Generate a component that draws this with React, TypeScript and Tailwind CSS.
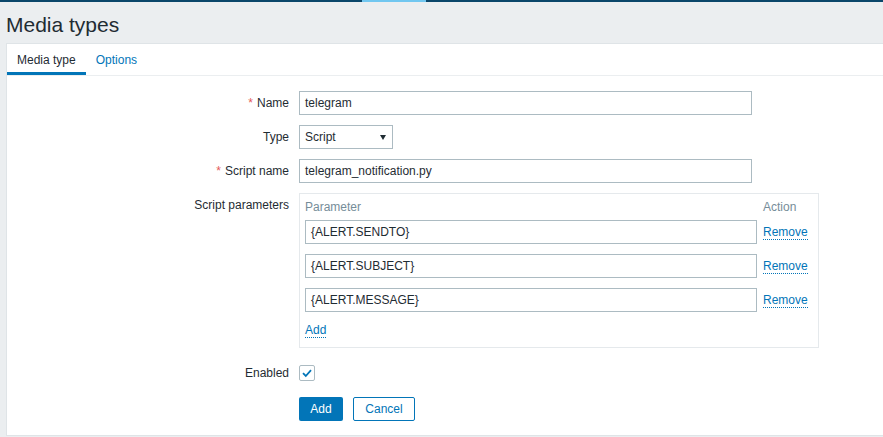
import React from "react";

const params = ["{ALERT.SENDTO}", "{ALERT.SUBJECT}", "{ALERT.MESSAGE}"];

function Label({ text, required }: { text: string; required?: boolean }) {
  return (
    <div className="w-[282px] h-[24px] flex items-center justify-end shrink-0">
      {required && <span className="text-[#e45959] mr-[4px]">*</span>}
      <span>{text}</span>
    </div>
  );
}

function Input({ value, width }: { value: string; width: string }) {
  return (
    <div className={`${width} h-[24px] border border-[#acbbc2] bg-white px-[5px] flex items-center`}>
      {value}
    </div>
  );
}

function DottedLink({ children }: { children: React.ReactNode }) {
  return (
    <span className="inline-block leading-[14px] text-[#0275b8] border-b border-dotted border-[#0275b8] cursor-pointer">
      {children}
    </span>
  );
}

export default function App() {
  return (
    <div className="min-h-screen bg-[#ebeef0] font-['Liberation_Sans',Arial,sans-serif] text-[12px] text-[#1f2c33]">
      {/* Top strip */}
      <div className="h-[2px] bg-[#0a466a] flex">
        <div className="ml-[362px] w-[64px] bg-[#71c7f0]" />
      </div>

      {/* Title */}
      <h1 className="pl-[6px] pt-[11px] pb-[6px] text-[21px] leading-[24px] font-normal">Media types</h1>

      {/* Panel */}
      <div className="ml-[6px] bg-white border-t border-l border-b border-[#dfe4e7]">
        {/* Tabs */}
        <div className="flex h-[32px] border-b border-[#ebeef0]">
          <div className="h-[31px] px-[10px] pt-[8px] leading-[16px] border-b-[3px] border-[#0275b8]">Media type</div>
          <div className="h-[31px] px-[10px] pt-[8px] leading-[16px] text-[#0275b8]">Options</div>
        </div>

        {/* Form */}
        <div className="pt-[15px] pb-[14px] flex flex-col gap-[10px]">
          <div className="flex gap-[10px]">
            <Label text="Name" required />
            <Input value="telegram" width="w-[453px]" />
          </div>

          <div className="flex gap-[10px]">
            <Label text="Type" />
            <div className="w-[94px] h-[24px] border border-[#acbbc2] pl-[5px] pr-[6px] flex items-center justify-between">
              <span>Script</span>
              <svg width="6" height="5" viewBox="0 0 6 5">
                <path d="M0 0 H6 L3 5 Z" fill="#1f2c33" />
              </svg>
            </div>
          </div>

          <div className="flex gap-[10px]">
            <Label text="Script name" required />
            <Input value="telegram_notification.py" width="w-[453px]" />
          </div>

          <div className="flex gap-[10px] items-start">
            <Label text="Script parameters" />
            <div className="w-[520px] border border-[#e5e9ec] pt-[5px] px-[5px] pb-[9px]">
              <div className="flex gap-[6px] leading-[16px] text-[#768d99]">
                <div className="w-[452px]">Parameter</div>
                <div>Action</div>
              </div>
              <div className="mt-[5px] flex flex-col gap-[10px]">
                {params.map((p) => (
                  <div key={p} className="flex gap-[6px] items-center">
                    <Input value={p} width="w-[452px]" />
                    <DottedLink>Remove</DottedLink>
                  </div>
                ))}
              </div>
              <div className="mt-[11px] flex">
                <DottedLink>Add</DottedLink>
              </div>
            </div>
          </div>

          <div className="flex gap-[10px] mt-[3px]">
            <Label text="Enabled" />
            <div className="h-[24px] flex items-center">
              <div className="w-[16px] h-[16px] border border-[#acbbc2] rounded-[2px] flex items-center justify-center">
                <svg width="12" height="12" viewBox="0 0 12 12">
                  <path d="M2 6.2 L4.8 9 L10 3.2" fill="none" stroke="#0275b8" strokeWidth="1.8" />
                </svg>
              </div>
            </div>
          </div>

          <div className="flex gap-[10px] mt-[2px]">
            <div className="w-[282px] shrink-0" />
            <button className="w-[44px] h-[24px] bg-[#0275b8] text-white rounded-[2px]">Add</button>
            <button className="w-[62px] h-[24px] bg-white border border-[#0275b8] text-[#0275b8] rounded-[2px]">Cancel</button>
          </div>
        </div>
      </div>
    </div>
  );
}
